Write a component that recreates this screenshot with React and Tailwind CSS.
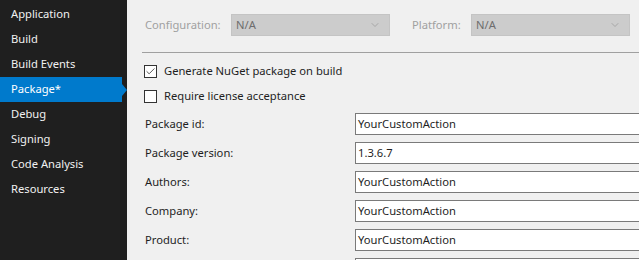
import { ChevronDown, Check } from 'lucide-react';

const navItems = ['Application', 'Build', 'Build Events', 'Package*', 'Debug', 'Signing', 'Code Analysis', 'Resources'];

const fields = [
    { label: 'Package id:', value: 'YourCustomAction' },
    { label: 'Package version:', value: '1.3.6.7' },
    { label: 'Authors:', value: 'YourCustomAction' },
    { label: 'Company:', value: 'YourCustomAction' },
    { label: 'Product:', value: 'YourCustomAction' },
    { label: '', value: '' },
];

const Combo = ({ width }) => (
    <div className={`flex h-[22px] items-center justify-between border border-[#c4c4c4] bg-[#cccccc] pl-[4px] pr-[8px] text-[#6d6d6d] ${width}`}>
        <span>N/A</span>
        <ChevronDown className="h-[12px] w-[12px] text-[#9a9a9a]" strokeWidth={1.5} />
    </div>
);

const CheckRow = ({ checked, label }) => (
    <div className="flex h-[25px] items-center gap-[7px]">
        <div className="flex h-[13px] w-[13px] items-center justify-center border border-[#333333] bg-white">
            {checked && <Check className="h-[11px] w-[11px] text-[#333333]" strokeWidth={1.75} />}
        </div>
        <span className="text-[#1e1e1e]">{label}</span>
    </div>
);

const App = () => {
    return (
        <div className="flex h-[260px] w-[639px] overflow-hidden text-[11.2px] font-['Noto_Sans','Segoe_UI',sans-serif]">
            <div className="w-[127px] shrink-0 bg-[#1f1f1f] pt-[2px]">
                {navItems.map((item) => {
                    const active = item === 'Package*';
                    return (
                        <div key={item} className="relative flex h-[25px] items-center">
                            <div className={`flex h-full w-[122px] items-center pl-[11px] ${active ? 'bg-[#007acc] text-white' : 'text-[#f1f1f1]'}`}>
                                {item}
                            </div>
                            {active && (
                                <div className="absolute left-[122px] top-1/2 h-0 w-0 -translate-y-1/2 border-y-[6px] border-l-[5px] border-y-transparent border-l-[#007acc]" />
                            )}
                        </div>
                    );
                })}
            </div>

            <div className="flex-1 bg-[#f0f0f0] pt-[14px]">
                <div className="flex items-center pl-[18px]">
                    <span className="w-[86px] text-[#a0a0a0]">Configuration:</span>
                    <Combo width="w-[159px]" />
                    <span className="ml-[22px] w-[59px] text-[#a0a0a0]">Platform:</span>
                    <Combo width="w-[159px]" />
                </div>

                <div className="ml-[15px] mt-[16px] border-t border-[#a0a0a0]" />

                <div className="mt-[6px] pl-[17px]">
                    <CheckRow checked label="Generate NuGet package on build" />
                    <CheckRow label="Require license acceptance" />
                </div>

                <div className="mt-[4px] flex flex-col gap-[7px] pl-[18px]">
                    {fields.map((f, i) => (
                        <div key={i} className="flex h-[22px] items-center">
                            <span className="w-[210px] text-[#1e1e1e]">{f.label}</span>
                            <div className="flex h-full flex-1 items-center border border-r-0 border-[#7a7a7a] bg-white pl-[2px] text-[#1e1e1e]">
                                {f.value}
                            </div>
                        </div>
                    ))}
                </div>
            </div>
        </div>
    );
};

export default App;
